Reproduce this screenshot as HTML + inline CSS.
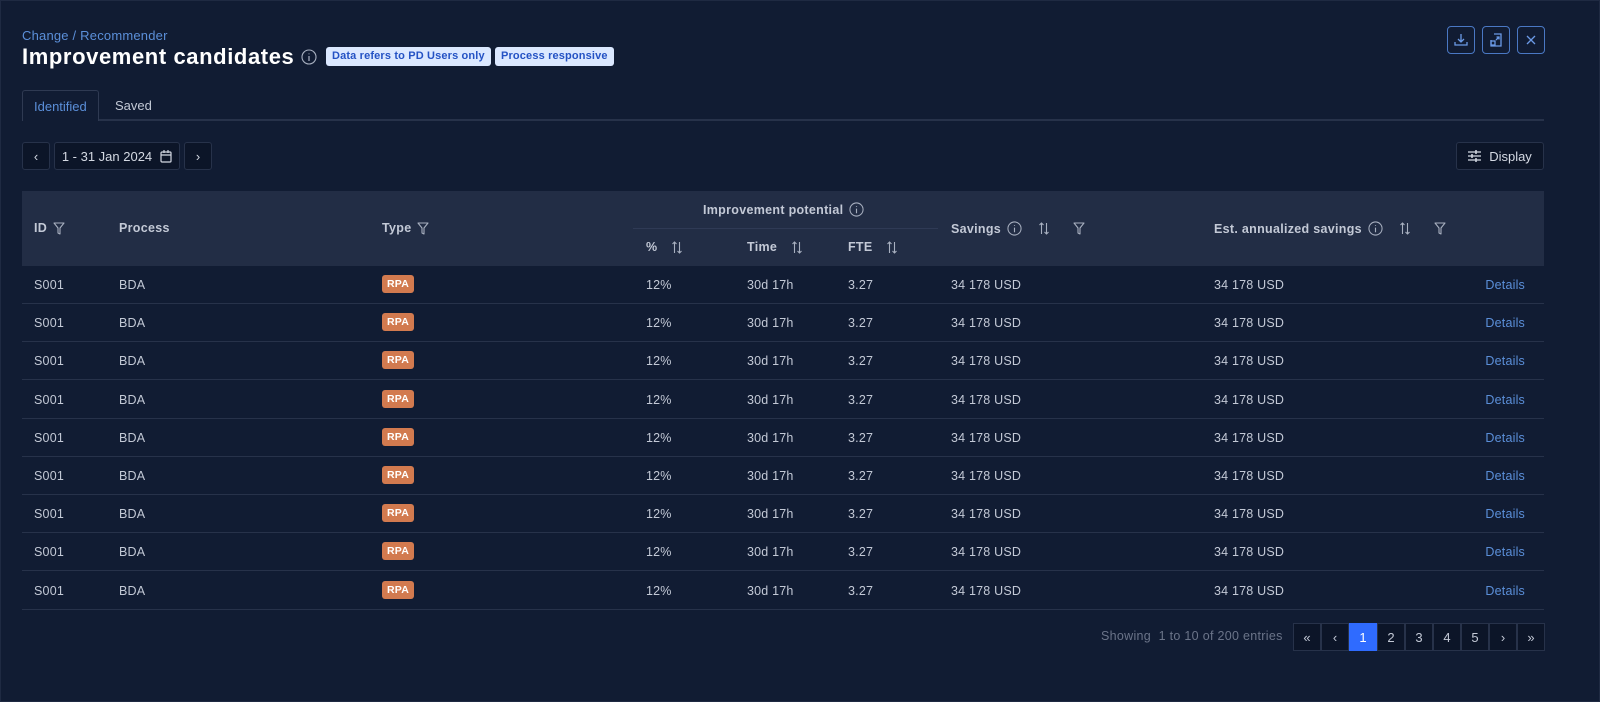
<!DOCTYPE html>
<html><head><meta charset="utf-8"><style>
*{box-sizing:border-box;margin:0;padding:0}
body{width:1600px;height:702px;background:#111c33;font-family:"Liberation Sans",sans-serif;color:#c9cfdb;position:relative;overflow:hidden;border:1px solid #1f2a42}
.abs{position:absolute}
.crumb{left:21px;top:27px;font-size:13px;color:#5b8fd9;letter-spacing:0.2px}
.title{left:21px;top:43px;font-size:22px;font-weight:bold;color:#fff;letter-spacing:0.6px}
.badge{top:46px;height:19px;background:#dbe8ff;color:#2452c4;font-size:11px;font-weight:bold;border-radius:3px;padding:3px 6px;line-height:13px;letter-spacing:0.15px}
.ic{width:28px;height:28px;border:1px solid #4a78c4;border-radius:4px;top:25px;display:flex;align-items:center;justify-content:center}
.tab{top:89px;height:31px;font-size:13px;padding:8px 11px}
.btn{top:141px;height:28px;border:1px solid #27324a;background:#0c1528;border-radius:3px;display:flex;align-items:center;justify-content:center;font-size:13px;color:#d4d9e3}
.th{font-size:12.5px;font-weight:bold;color:#c3c9d6;display:flex;align-items:center;gap:6px;letter-spacing:0.3px}
.row{position:absolute;left:21px;width:1522px;height:38px;border-bottom:1px solid #27324a;font-size:12.5px;color:#c3c9d6;letter-spacing:0.2px}
.row span{position:absolute;top:12px}
.row span.rpa{background:#d27a4f;color:#fff;font-weight:bold;font-size:10.5px;padding:3px 5px;border-radius:3px;top:9px}
.pg{top:622px;height:28px;width:28px;border:1px solid #27324a;background:#0c1528;display:flex;align-items:center;justify-content:center;font-size:13px;color:#c3c9d6}
</style></head><body>
<svg width="0" height="0" style="position:absolute"><defs>
<symbol id="f" viewBox="0 0 12 13"><path d="M1 1h10L7 6v6L5 11V6z" fill="none" stroke="#a8b0c0" stroke-width="1.1" stroke-linejoin="round"/></symbol>
<symbol id="s" viewBox="0 0 12 13"><path d="M3.5 12V1M1.5 3l2-2 2 2M8.5 1v11M6.5 10l2 2 2-2" fill="none" stroke="#a8b0c0" stroke-width="1.1"/></symbol>
<symbol id="i" viewBox="0 0 16 16"><circle cx="8" cy="8" r="7" fill="none" stroke="#a8b0c0" stroke-width="1.1"/><path d="M8 7v5M8 4.5v.8" stroke="#a8b0c0" stroke-width="1.2"/></symbol>
</defs></svg>
<div class="abs crumb">Change / Recommender</div>
<div class="abs title">Improvement candidates</div>
<svg class="abs" style="left:300px;top:48px" width="16" height="16"><use href="#i"/></svg>
<div class="abs badge" style="left:325px">Data refers to PD Users only</div>
<div class="abs badge" style="left:494px">Process responsive</div>
<div class="abs ic" style="left:1446px"><svg width="14" height="14" viewBox="0 0 14 14" fill="none" stroke="#6b9ae6" stroke-width="1.3"><path d="M7 1v8M4 6l3 3 3-3M1 9v3h12V9"/></svg></div>
<div class="abs ic" style="left:1481px"><svg width="14" height="14" viewBox="0 0 14 14" fill="none" stroke="#6b9ae6" stroke-width="1.3"><path d="M5 1h7v12H2V7"/><rect x="2" y="8" width="4" height="4"/><path d="M7 7l3-3M7.5 4H10v2.5"/></svg></div>
<div class="abs ic" style="left:1516px"><svg width="12" height="12" viewBox="0 0 12 12" stroke="#6b9ae6" stroke-width="1.3"><path d="M2 2l8 8M10 2l-8 8"/></svg></div>
<div class="abs" style="left:21px;top:118px;width:1522px;height:2px;background:#27324a"></div>
<div class="abs tab" style="left:21px;border:1px solid #2f3a52;border-bottom:none;border-radius:3px 3px 0 0;color:#5b8fd9;background:#111c33;height:31px">Identified</div>
<div class="abs tab" style="left:103px;color:#c3c9d6">Saved</div>
<div class="abs btn" style="left:21px;width:28px">‹</div>
<div class="abs btn" style="left:53px;width:126px;gap:8px">1 - 31 Jan 2024 <svg width="12" height="13" viewBox="0 0 12 13" fill="none" stroke="#d4d9e3" stroke-width="1.2"><rect x="1" y="2" width="10" height="10" rx="1"/><path d="M1 5h10M4 0v3M8 0v3"/></svg></div>
<div class="abs btn" style="left:183px;width:28px">›</div>
<div class="abs btn" style="left:1455px;width:88px;gap:8px"><svg width="13" height="12" viewBox="0 0 13 12" stroke="#d4d9e3" stroke-width="1.2"><path d="M0 2h13M0 6h13M0 10h13"/><path d="M8 0v4M4 4v4M8 8v4" stroke-width="1.5"/></svg>Display</div>
<div class="abs" style="left:21px;top:190px;width:1522px;height:75px;background:#222d45"></div>
<div class="abs" style="left:632px;top:227px;width:305px;height:1px;background:#2f3a55"></div>
<div class="abs th" style="left:33px;top:220px">ID <svg width="12" height="13"><use href="#f"/></svg></div>
<div class="abs th" style="left:118px;top:220px">Process</div>
<div class="abs th" style="left:381px;top:220px">Type <svg width="12" height="13"><use href="#f"/></svg></div>
<div class="abs th" style="left:702px;top:201px">Improvement potential <svg width="15" height="15"><use href="#i"/></svg></div>
<div class="abs th" style="left:645px;top:239px">% &nbsp;<svg width="12" height="13"><use href="#s"/></svg></div>
<div class="abs th" style="left:746px;top:239px">Time &nbsp;<svg width="12" height="13"><use href="#s"/></svg></div>
<div class="abs th" style="left:847px;top:239px">FTE &nbsp;<svg width="12" height="13"><use href="#s"/></svg></div>
<div class="abs th" style="left:950px;top:220px">Savings <svg width="15" height="15"><use href="#i"/></svg>&nbsp;<svg width="12" height="13"><use href="#s"/></svg>&nbsp;&nbsp;&nbsp;<svg width="12" height="13"><use href="#f"/></svg></div>
<div class="abs th" style="left:1213px;top:220px">Est. annualized savings <svg width="15" height="15"><use href="#i"/></svg>&nbsp;<svg width="12" height="13"><use href="#s"/></svg>&nbsp;&nbsp;&nbsp;<svg width="12" height="13"><use href="#f"/></svg></div>
<div id="rows"></div>
<script>
let h='';for(let i=0;i<9;i++){let t=265+i*38.2;h+=`<div class="row" style="top:${t}px"><span style="left:12px">S001</span><span style="left:97px">BDA</span><span class="rpa" style="left:360px">RPA</span><span style="left:624px">12%</span><span style="left:725px">30d 17h</span><span style="left:826px">3.27</span><span style="left:929px">34 178 USD</span><span style="left:1192px">34 178 USD</span><span style="right:19px;color:#5b8fd9">Details</span></div>`}
document.getElementById('rows').innerHTML=h;
</script>
<div class="abs" style="left:1100px;top:628px;font-size:12.5px;color:#6b7489;letter-spacing:0.3px">Showing &nbsp;1 to 10 of 200 entries</div>
<div class="abs pg" style="left:1292px">«</div>
<div class="abs pg" style="left:1320px">‹</div>
<div class="abs pg" style="left:1348px;background:#2f6bff;color:#fff;border-color:#2f6bff">1</div>
<div class="abs pg" style="left:1376px">2</div>
<div class="abs pg" style="left:1404px">3</div>
<div class="abs pg" style="left:1432px">4</div>
<div class="abs pg" style="left:1460px">5</div>
<div class="abs pg" style="left:1488px">›</div>
<div class="abs pg" style="left:1516px">»</div>
</body></html>
